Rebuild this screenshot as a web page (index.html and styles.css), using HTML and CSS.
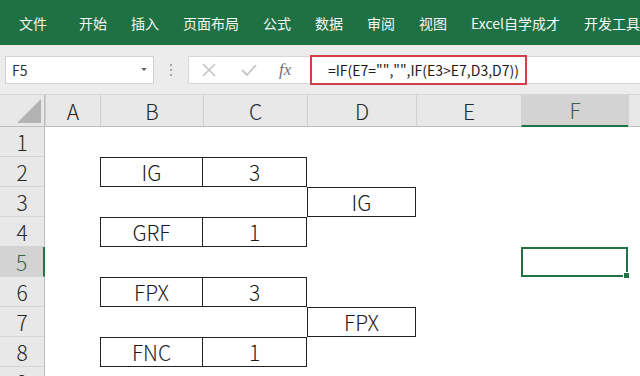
FILE: index.html
```html
<!DOCTYPE html>
<html lang="zh">
<head>
  <meta charset="UTF-8">
  <title>Excel</title>
  <link rel="stylesheet" href="styles.css">
</head>
<body>
  <div class="tabs">
    <span class="tab first">文件</span>
    <span class="tab">开始</span>
    <span class="tab">插入</span>
    <span class="tab">页面布局</span>
    <span class="tab">公式</span>
    <span class="tab">数据</span>
    <span class="tab">审阅</span>
    <span class="tab">视图</span>
    <span class="tab">Excel自学成才</span>
    <span class="tab">开发工具</span>
  </div>

  <div class="toolbar">
    <div class="namebox">
      <span>F5</span>
      <span class="caret"></span>
    </div>
    <div class="dots"><i></i><i></i><i></i></div>
    <div class="fbar">
      <div class="ficons">
        <svg width="16" height="16" viewBox="0 0 16 16"><path d="M2 2 L14 14 M14 2 L2 14" stroke="#c4c4c4" stroke-width="1.6" fill="none"/></svg>
        <svg width="18" height="16" viewBox="0 0 18 16"><path d="M2 8 L7 13 L16 3" stroke="#c4c4c4" stroke-width="1.8" fill="none"/></svg>
        <span class="fx">fx</span>
      </div>
      <div class="formula">=IF(E7="","",IF(E3&gt;E7,D3,D7))</div>
    </div>
  </div>

  <div class="sheet">
    <div class="hd corner"><span class="tri"></span></div>
    <div class="hd col">A</div>
    <div class="hd col">B</div>
    <div class="hd col">C</div>
    <div class="hd col">D</div>
    <div class="hd col">E</div>
    <div class="hd col sel">F</div>
    <div class="hd col"></div>

    <div class="hd row">1</div>
    <div></div><div></div><div></div><div></div><div></div><div></div><div></div>

    <div class="hd row">2</div>
    <div></div><div class="c bl">IG</div><div class="c br">3</div><div></div><div></div><div></div><div></div>

    <div class="hd row">3</div>
    <div></div><div></div><div></div><div class="c box">IG</div><div></div><div></div><div></div>

    <div class="hd row">4</div>
    <div></div><div class="c bl">GRF</div><div class="c br">1</div><div></div><div></div><div></div><div></div>

    <div class="hd row sel">5</div>
    <div></div><div></div><div></div><div></div><div></div><div class="active"><span class="handle"></span></div><div></div>

    <div class="hd row">6</div>
    <div></div><div class="c bl">FPX</div><div class="c br">3</div><div></div><div></div><div></div><div></div>

    <div class="hd row">7</div>
    <div></div><div></div><div></div><div class="c box">FPX</div><div></div><div></div><div></div>

    <div class="hd row">8</div>
    <div></div><div class="c bl">FNC</div><div class="c br">1</div><div></div><div></div><div></div><div></div>

    <div class="hd row">9</div>
    <div></div><div></div><div></div><div></div><div></div><div></div><div></div>
  </div>
</body>
</html>
```

FILE: styles.css
```css
body { margin: 0; width: 640px; height: 376px; overflow: hidden; background: #fff; font-family: "Noto Sans CJK SC", "Noto Sans", sans-serif; color: #222; }

.tabs { height: 45px; background: #1f7144; display: flex; align-items: center; padding-left: 19px; gap: 24px; box-sizing: border-box; }
.tab { color: #f4f8f5; font-size: 14px; line-height: 1; white-space: nowrap; }
.tab.first { margin-right: 8px; }

.toolbar { height: 50px; background: #ececec; display: flex; align-items: center; border-bottom: 1px solid #d6d6d6; box-sizing: border-box; }
.namebox { margin-left: 5px; width: 149px; height: 28px; background: #fff; border: 1px solid #d2d2d2; box-sizing: border-box; display: flex; align-items: center; justify-content: space-between; padding: 0 6px 0 6px; font-size: 14px; color: #333; }
.caret { width: 0; height: 0; border-left: 3px solid transparent; border-right: 3px solid transparent; border-top: 3px solid #666; }
.dots { width: 34px; display: flex; flex-direction: column; align-items: center; gap: 3px; }
.dots i { width: 2px; height: 2px; background: #a8a8a8; display: block; }
.fbar { flex: 1; height: 28px; background: #fff; border: 1px solid #d8d8d8; border-right: none; box-sizing: border-box; display: flex; align-items: center; }
.ficons { width: 121px; display: flex; align-items: center; padding-left: 12px; gap: 23px; box-sizing: border-box; }
.fx { font-family: "Liberation Serif", serif; font-style: italic; font-size: 17px; color: #6f6f6f; margin-left: -2px; }
.formula { width: 217px; height: 30px; border: 2px solid #d23f48; box-sizing: border-box; font-size: 14px; color: #1b1b1b; display: flex; align-items: center; padding-left: 16px; white-space: nowrap; }

.sheet { display: grid; grid-template-columns: 45px 55px 103px 104px 109px 105px 107px 12px; grid-template-rows: 32px repeat(9, 30px); }
.hd { background: #e8e8e8; display: flex; align-items: center; justify-content: center; font-size: 21px; font-weight: 300; color: #262626; box-sizing: border-box; }
.col { border-bottom: 1px solid #bdbdbd; border-left: 1px solid #d0d0d0; }
.col.sel { background: #d3d3d3; border-bottom: 2px solid #217346; color: #3e5e4c; }
.corner { border-right: 1px solid #bdbdbd; border-bottom: 1px solid #bdbdbd; position: relative; }
.tri { position: absolute; right: 3px; bottom: 3px; width: 0; height: 0; border-left: 24px solid transparent; border-bottom: 24px solid #b3b3b3; }
.row { border-right: 1px solid #bdbdbd; border-bottom: 1px solid #d4d4d4; }
.row.sel { background: #d3d3d3; border-right: 2px solid #217346; color: #3e5e4c; }

.c { display: flex; align-items: center; justify-content: center; font-size: 21px; font-weight: 300; color: #1a1a1a; border-top: 1px solid #222; border-bottom: 1px solid #222; box-sizing: border-box; }
.bl { border-left: 1px solid #222; border-right: 1px solid #222; }
.br { border-right: 1px solid #222; }
.box { border-left: 1px solid #222; border-right: 1px solid #222; }

.active { border: 2px solid #217346; position: relative; box-sizing: border-box; }
.handle { position: absolute; right: -4px; bottom: -4px; width: 5px; height: 5px; background: #217346; border: 1px solid #fff; }
```
